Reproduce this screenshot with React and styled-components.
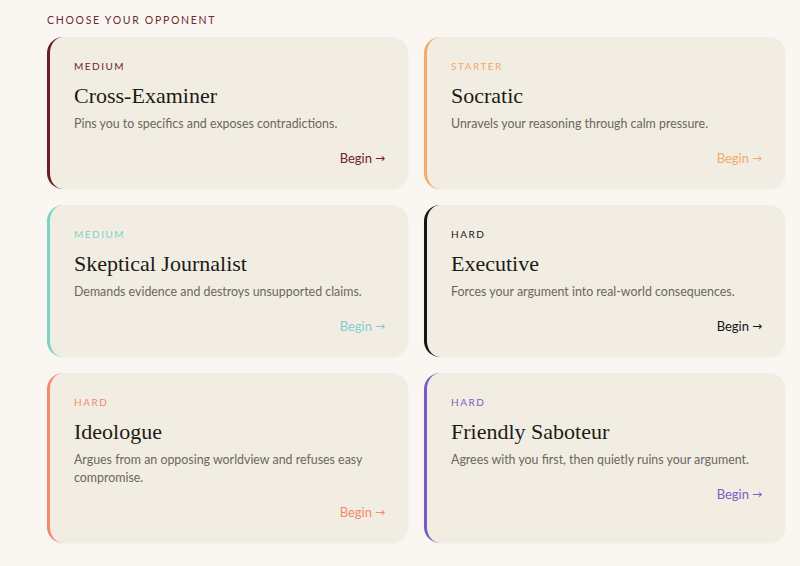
import React from "react";
import styled, { createGlobalStyle } from "styled-components";

const Global = createGlobalStyle`
  html, body { margin: 0; padding: 0; background: #faf7f2; }
  body { font-family: Lato, "Noto Sans", sans-serif; }
`;

const Page = styled.div`
  padding: 13px 15px 20px 47px;
  min-height: 566px;
  box-sizing: border-box;
`;

const Heading = styled.div`
  font-size: 10.5px;
  line-height: 14px;
  letter-spacing: 1.7px;
  text-transform: uppercase;
  color: #6b2a30;
  margin-bottom: 10px;
`;

const Grid = styled.div`
  display: grid;
  grid-template-columns: 1fr 1fr;
  gap: 16px;
`;

const Card = styled.div`
  background: #f2ede3;
  border-radius: 16px;
  border-left: 3px solid ${(p) => p.$accent};
  padding: 22px 23px 22px 24px;
  display: flex;
  flex-direction: column;
  box-shadow: 0 1px 3px rgba(60, 40, 20, 0.04);
`;

const Level = styled.div`
  font-size: 10px;
  line-height: 14px;
  letter-spacing: 1.5px;
  text-transform: uppercase;
  color: ${(p) => p.$accent};
`;

const Title = styled.div`
  margin-top: 9px;
  font-family: "Liberation Serif", "DejaVu Serif", serif;
  font-size: 22px;
  line-height: 28px;
  color: #1c1a17;
`;

const Desc = styled.div`
  margin-top: 5px;
  font-size: 12.4px;
  line-height: 18px;
  color: #6b6660;
`;

const Begin = styled.div`
  margin-top: 16px;
  align-self: flex-end;
  display: flex;
  align-items: center;
  gap: 3px;
  font-size: 13px;
  line-height: 18px;
  color: ${(p) => p.$accent};
`;

const Arrow = styled.span`
  font-family: "DejaVu Sans", sans-serif;
  font-size: 12px;
`;

const opponents = [
  { level: "Medium", name: "Cross-Examiner", desc: "Pins you to specifics and exposes contradictions.", accent: "#6e1f25" },
  { level: "Starter", name: "Socratic", desc: "Unravels your reasoning through calm pressure.", accent: "#f2a96a" },
  { level: "Medium", name: "Skeptical Journalist", desc: "Demands evidence and destroys unsupported claims.", accent: "#7fd0c9" },
  { level: "Hard", name: "Executive", desc: "Forces your argument into real-world consequences.", accent: "#151515" },
  { level: "Hard", name: "Ideologue", desc: "Argues from an opposing worldview and refuses easy compromise.", accent: "#f3896a" },
  { level: "Hard", name: "Friendly Saboteur", desc: "Agrees with you first, then quietly ruins your argument.", accent: "#7b5cc4" },
];

export default function App() {
  return (
    <>
      <Global />
      <Page>
        <Heading>Choose your opponent</Heading>
        <Grid>
          {opponents.map((o) => (
            <Card key={o.name} $accent={o.accent}>
              <Level $accent={o.accent}>{o.level}</Level>
              <Title>{o.name}</Title>
              <Desc>{o.desc}</Desc>
              <Begin $accent={o.accent}>
                Begin<Arrow>→</Arrow>
              </Begin>
            </Card>
          ))}
        </Grid>
      </Page>
    </>
  );
}
